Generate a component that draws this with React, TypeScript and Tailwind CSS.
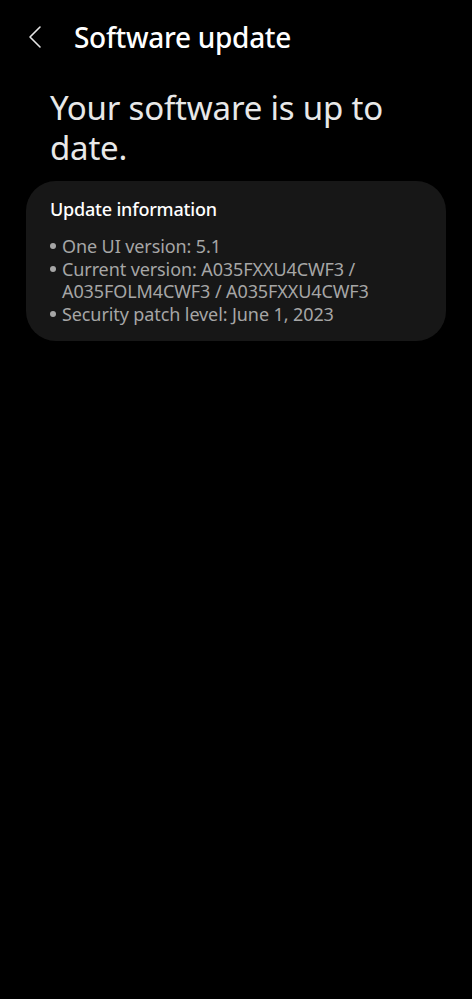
import React from 'react';

const infoLines: string[][] = [
    ['One UI version: 5.1'],
    ['Current version: A035FXXU4CWF3 /', 'A035FOLM4CWF3 / A035FXXU4CWF3'],
    ['Security patch level: June 1, 2023'],
];

const App: React.FC = () => {
    return (
        <div className="min-h-[999px] w-full bg-black text-white" style={{ fontFamily: '"Noto Sans", Roboto, sans-serif' }}>
            {/* Header */}
            <div className="flex items-center h-[76px] pl-[26px]">
                <svg width="18" height="24" viewBox="0 0 18 24" className="shrink-0 -mt-[2px]">
                    <path d="M14 2 L4 12 L14 22" fill="none" stroke="#e5e5e5" strokeWidth="1.6" strokeLinecap="round" strokeLinejoin="round" />
                </svg>
                <h1 className="ml-[30px] -mt-[2px] text-[28px] leading-none font-medium tracking-[-0.3px]">Software update</h1>
            </div>

            {/* Status */}
            <h2 className="px-[50px] pt-[12px] text-[33px] leading-[40px] text-[#e8e8e8] tracking-[-0.2px]">
                Your software is up to date.
            </h2>

            {/* Info card */}
            <div className="mx-[26px] mt-[13px] rounded-[30px] bg-[#171717] px-[24px] pt-[16px] pb-[16px]">
                <h3 className="text-[18px] leading-[24px] font-medium text-white tracking-[-0.2px]">Update information</h3>
                <ul className="mt-[14px] text-[18px] leading-[22.6px] text-[#a6a6a6] tracking-[-0.1px]">
                    {infoLines.map((line, i) => (
                        <li key={i} className="flex">
                            <span className="w-[12px] shrink-0 flex h-[22.6px] items-center">
                                <span className="block h-[6px] w-[6px] rounded-full bg-[#a6a6a6]" />
                            </span>
                            <span>
                                {line.map((part, j) => (
                                    <span key={j} className="block">{part}</span>
                                ))}
                            </span>
                        </li>
                    ))}
                </ul>
            </div>
        </div>
    );
};

export default App;
